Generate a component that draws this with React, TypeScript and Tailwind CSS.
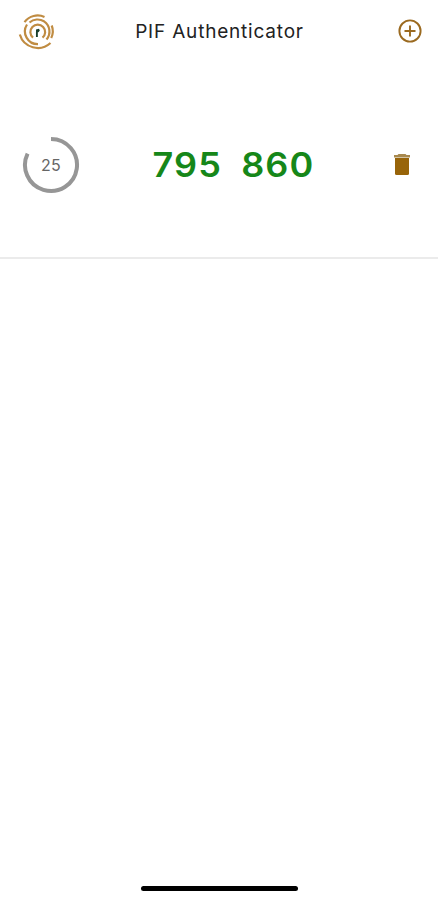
function Logo() {
  return (
    <svg className="overflow-visible" width="38" height="38" viewBox="0 0 38 38" fill="none" stroke="#c08c42" strokeWidth="2.2">
      <path d="M1.8 22.5A18.8 18.8 0 0 0 32.5 31" />
      <path d="M6.5 10.2A16.3 16.3 0 0 1 26.5 5" />
      <path d="M20 32.2A12.8 12.8 0 0 1 9 12.5" />
      <path d="M11.5 10.5A12.3 12.3 0 0 1 26 9.3A12.3 12.3 0 0 1 28.5 27.5" />
      <path d="M33.7 13.5A15.5 15.5 0 0 1 33.2 26" />
      <path d="M15 25.7A7.4 7.4 0 1 1 24.5 25.7" />
      <path d="M18.9 25V20" stroke="#183e2c" strokeWidth="1.9" />
      <path d="M18 17.5L21 16.8L21.8 18.5L20.5 20.3L18 20Z" fill="#183e2c" stroke="none" />
    </svg>
  );
}

export default function App() {
  return (
    <main className="flex h-[900px] w-[438px] flex-col bg-white font-['Inter',sans-serif]">
      <header className="flex h-[62px] items-center justify-between pr-4 pl-[18px]">
        <Logo />
        <h1 className="-ml-[1px] w-[174px] pt-[2px] text-center text-[19px] tracking-[0.8px] whitespace-nowrap text-[#222]">PIF Authenticator</h1>
        <button aria-label="Add account" className="ml-[14px]">
          <svg width="24" height="24" viewBox="0 0 24 24" fill="none" stroke="#9b6a20" strokeWidth="1.9">
            <circle cx="12" cy="12" r="10.6" />
            <path d="M12 6.5v11M6.5 12h11" />
          </svg>
        </button>
      </header>
      <section className="flex h-[197px] items-center justify-between border-b-2 border-[#ebebeb] pt-[11px] pr-[27px] pl-[22px]">
        <div className="grid size-[58px] place-items-center">
          <svg className="col-start-1 row-start-1" width="58" height="58" viewBox="0 0 58 58" fill="none">
            <path d="M29 3A26 26 0 1 1 5.6 17.7" stroke="#969696" strokeWidth="4" />
          </svg>
          <span className="col-start-1 row-start-1 text-[16px] tracking-[0.2px] text-[#666]">25</span>
        </div>
        <div className="mr-[6px] -mt-[1px] flex scale-x-[1.06] gap-[18px] text-[34px] font-semibold tracking-[1.1px] text-[#168719]">
          <span>795</span>
          <span>860</span>
        </div>
        <button aria-label="Delete account">
          <svg width="18" height="22" viewBox="0 0 18 22">
            <path d="M5.5 0h7l1 1H17v2.5H1V1h3.5z" fill="#a8894e" />
            <path d="M2 4h14v15.5q0 1.5-1.5 1.5h-11Q2 21 2 19.5z" fill="#986409" />
          </svg>
        </button>
      </section>
      <div className="mt-auto mb-[9px] ml-[141px] h-[5px] w-[157px] rounded-full bg-black" />
    </main>
  );
}
